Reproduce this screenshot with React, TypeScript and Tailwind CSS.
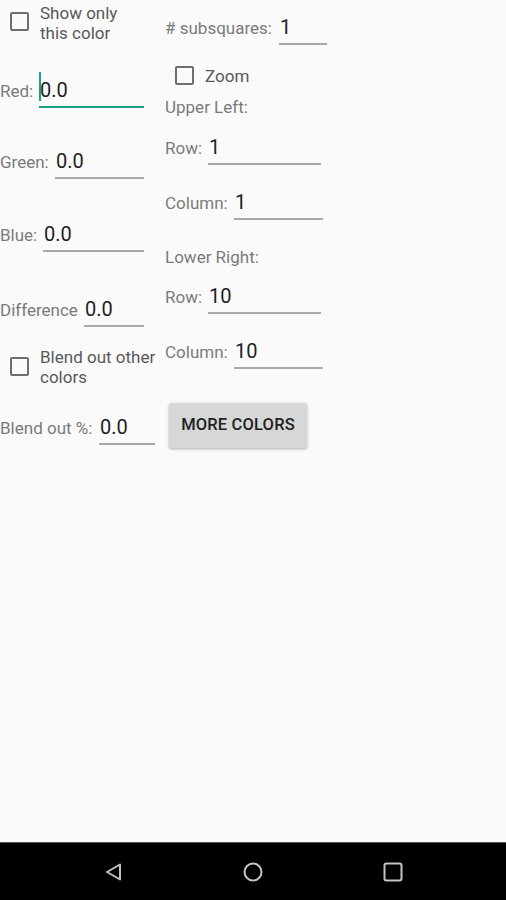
import React from "react";

function Checkbox({ className = "" }: { className?: string }) {
	return (
		<span
			className={`block w-[19px] h-[19px] shrink-0 rounded-[2px] border-2 border-[#6e6e6e] ${className}`}
		/>
	);
}

function Field({
	label,
	value,
	width,
	rowWidth,
	focused = false,
	className = "",
}: {
	label: string;
	value: string;
	width: string;
	rowWidth: string;
	focused?: boolean;
	className?: string;
}) {
	return (
		<div className={`flex items-baseline ${rowWidth} ${className}`}>
			<span className="text-[17px] leading-[20px] text-[#7a7a7a]">{label}</span>
			<span
				className={`relative ml-auto ${width} pl-[1px] pb-[4px] text-[20px] leading-[24px] text-[#1e1e1e] border-b-2 ${
					focused ? "border-[#1f9e86]" : "border-[#a8a8a8]"
				}`}
			>
				{focused && (
					<span className="absolute left-[0px] top-[-6px] w-[2px] h-[29px] bg-[#1f9e86]" />
				)}
				{value}
			</span>
		</div>
	);
}

export default function App() {
	return (
		<div className="flex flex-col min-h-[900px] bg-[#fafafa] font-['Roboto',_'Liberation_Sans',_sans-serif]">
			<div className="flex flex-1">
				{/* left column */}
				<div className="flex flex-col w-[165px] shrink-0">
					<div className="flex items-start pt-[3px]">
						<Checkbox className="ml-[10px] mt-[9px]" />
						<span className="ml-[11px] text-[17px] leading-[20px] text-[#585858]">
							Show only
							<br />
							this color
						</span>
					</div>
					<Field
						label="Red:"
						value="0.0"
						width="w-[105px]"
						rowWidth="w-[144px]"
						focused
						className="mt-[35px]"
					/>
					<Field
						label="Green:"
						value="0.0"
						width="w-[89px]"
						rowWidth="w-[144px]"
						className="mt-[41px]"
					/>
					<Field
						label="Blue:"
						value="0.0"
						width="w-[101px]"
						rowWidth="w-[144px]"
						className="mt-[43px]"
					/>
					<Field
						label="Difference"
						value="0.0"
						width="w-[60px]"
						rowWidth="w-[144px]"
						className="mt-[45px]"
					/>
					<div className="flex items-start mt-[20px]">
						<Checkbox className="ml-[10px] mt-[10px]" />
						<span className="ml-[11px] text-[17px] leading-[20px] text-[#585858]">
							Blend out other
							<br />
							colors
						</span>
					</div>
					<Field
						label="Blend out %:"
						value="0.0"
						width="w-[56px]"
						rowWidth="w-[155px]"
						className="mt-[28px]"
					/>
				</div>

				{/* right column */}
				<div className="flex flex-col">
					<Field
						label="# subsquares:"
						value="1"
						width="w-[48px]"
						rowWidth="w-[162px]"
						className="mt-[15px]"
					/>
					<div className="flex items-start mt-[21px]">
						<Checkbox className="ml-[10px]" />
						<span className="ml-[11px] mt-[0px] text-[17px] leading-[20px] text-[#585858]">
							Zoom
						</span>
					</div>
					<span className="mt-[11px] text-[17px] leading-[20px] text-[#7a7a7a]">
						Upper Left:
					</span>
					<Field
						label="Row:"
						value="1"
						width="w-[113px]"
						rowWidth="w-[156px]"
						className="mt-[18px]"
					/>
					<Field
						label="Column:"
						value="1"
						width="w-[89px]"
						rowWidth="w-[158px]"
						className="mt-[25px]"
					/>
					<span className="mt-[27px] text-[17px] leading-[20px] text-[#7a7a7a]">
						Lower Right:
					</span>
					<Field
						label="Row:"
						value="10"
						width="w-[113px]"
						rowWidth="w-[156px]"
						className="mt-[17px]"
					/>
					<Field
						label="Column:"
						value="10"
						width="w-[89px]"
						rowWidth="w-[158px]"
						className="mt-[25px]"
					/>
					<button className="mt-[34px] ml-[4px] w-[138px] h-[45px] rounded-[2px] bg-[#d6d7d7] shadow-[0_1px_3px_rgba(0,0,0,0.3)] text-[16.5px] font-medium tracking-[0.01em] text-[#222]">
						MORE COLORS
					</button>
				</div>
			</div>

			{/* nav bar */}
			<div className="flex h-[58px] items-center justify-center gap-[116px] bg-black border-t border-[#555]">
				<svg width="24" height="24" viewBox="0 0 24 24">
					<path
						d="M6 12 L19 4.5 L19 19.5 Z"
						fill="none"
						stroke="#c4c4c4"
						strokeWidth="2"
						strokeLinejoin="round"
					/>
				</svg>
				<svg width="24" height="24" viewBox="0 0 24 24">
					<circle cx="12" cy="12" r="8.5" fill="none" stroke="#c4c4c4" strokeWidth="2" />
				</svg>
				<svg width="24" height="24" viewBox="0 0 24 24">
					<rect
						x="3.5"
						y="3.5"
						width="17"
						height="17"
						rx="2"
						fill="none"
						stroke="#c4c4c4"
						strokeWidth="2"
					/>
				</svg>
			</div>
		</div>
	);
}
